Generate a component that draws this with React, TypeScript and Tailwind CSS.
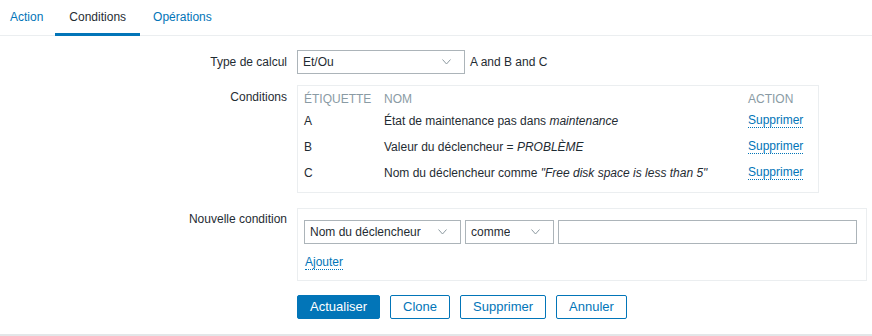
import React from "react";

// Fausse liste déroulante (rendu statique façon Zabbix)
function FakeSelect({ value, width }: { value: string; width: string }) {
  return (
    <div
      className={`${width} h-[24px] shrink-0 border border-[#acb4b9] bg-white flex items-center justify-between pl-[5px] pr-[13px]`}
    >
      <span className="truncate">{value}</span>
      <svg width="9" height="6" viewBox="0 0 9 6" className="shrink-0">
        <polyline points="0.5,0.5 4.5,5 8.5,0.5" fill="none" stroke="#8d9aa1" strokeWidth="1" />
      </svg>
    </div>
  );
}

function DottedLink({ children }: { children: React.ReactNode }) {
  return (
    <a className="text-[#0275b8] border-b border-dotted border-[#0275b8] leading-[13px] cursor-pointer">
      {children}
    </a>
  );
}

const conditions = [
  { label: "A", text: <>État de maintenance pas dans <i>maintenance</i></> },
  { label: "B", text: <>Valeur du déclencheur = <i>PROBLÈME</i></> },
  { label: "C", text: <>Nom du déclencheur comme <i>"Free disk space is less than 5"</i></> },
];

const btn = "h-[24px] px-[12px] text-[13px] border border-[#0275b8] rounded-[2px]";

export default function App() {
  return (
    <div className="w-[872px] h-[336px] bg-white text-[12px] leading-[14px] text-[#1f2c33] font-['Liberation_Sans',Arial,sans-serif] border-b-2 border-[#e3e6e8]">
      {/* ── Onglets ── */}
      <div className="h-[36px] flex border-b border-[#ebeef0]">
        <div className="h-[36px] flex items-center pl-[10px] pr-[12px] text-[#0275b8] pb-[3px]">Action</div>
        <div className="h-[36px] flex items-center px-[14px] border-b-[3px] border-[#0275b8]">Conditions</div>
        <div className="h-[36px] flex items-center px-[13px] text-[#0275b8] pb-[3px]">Opérations</div>
      </div>

      {/* ── Formulaire ── */}
      <div className="grid grid-cols-[287px_1fr] gap-x-[10px] pt-[14px]">
        {/* Type de calcul */}
        <div className="text-right h-[24px] flex items-center justify-end">Type de calcul</div>
        <div className="flex items-center gap-[5px]">
          <FakeSelect value="Et/Ou" width="w-[168px]" />
          <span>A and B and C</span>
        </div>

        {/* Conditions */}
        <div className="text-right mt-[11px] pt-[5px]">Conditions</div>
        <div className="mt-[11px]">
          <div className="w-[522px] border border-[#ebeef0] pl-[6px] pr-[13px] pt-[3px] pb-[6px]">
            <div className="grid grid-cols-[80px_1fr_auto]">
              <div className="h-[19px] flex items-center uppercase text-[#8a9ba4]">Étiquette</div>
              <div className="h-[19px] flex items-center uppercase text-[#8a9ba4]">Nom</div>
              <div className="h-[19px] flex items-center uppercase text-[#8a9ba4] w-[57px]">Action</div>
              {conditions.map((c) => (
                <React.Fragment key={c.label}>
                  <div className="h-[26px] flex items-center">{c.label}</div>
                  <div className="h-[26px] flex items-center">
                    <span>{c.text}</span>
                  </div>
                  <div className="h-[26px] flex items-center">
                    <DottedLink>Supprimer</DottedLink>
                  </div>
                </React.Fragment>
              ))}
            </div>
          </div>
        </div>

        {/* Nouvelle condition */}
        <div className="text-right mt-[15px] pt-[4px]">Nouvelle condition</div>
        <div className="mt-[15px]">
          <div className="w-[570px] h-[73px] border border-[#ebeef0] pl-[6px] pr-[9px] pt-[11px]">
            <div className="flex gap-[4px]">
              <FakeSelect value="Nom du déclencheur" width="w-[157px]" />
              <FakeSelect value="comme" width="w-[89px]" />
              <div className="flex-1 h-[24px] border border-[#acb4b9] bg-white" />
            </div>
            <div className="mt-[11px] pl-px">
              <DottedLink>Ajouter</DottedLink>
            </div>
          </div>
        </div>

        {/* Boutons */}
        <div />
        <div className="mt-[14px] flex gap-[10px]">
          <button className={`${btn} bg-[#0275b8] text-white`}>Actualiser</button>
          <button className={`${btn} bg-white text-[#0275b8]`}>Clone</button>
          <button className={`${btn} bg-white text-[#0275b8]`}>Supprimer</button>
          <button className={`${btn} bg-white text-[#0275b8]`}>Annuler</button>
        </div>
      </div>
    </div>
  );
}
